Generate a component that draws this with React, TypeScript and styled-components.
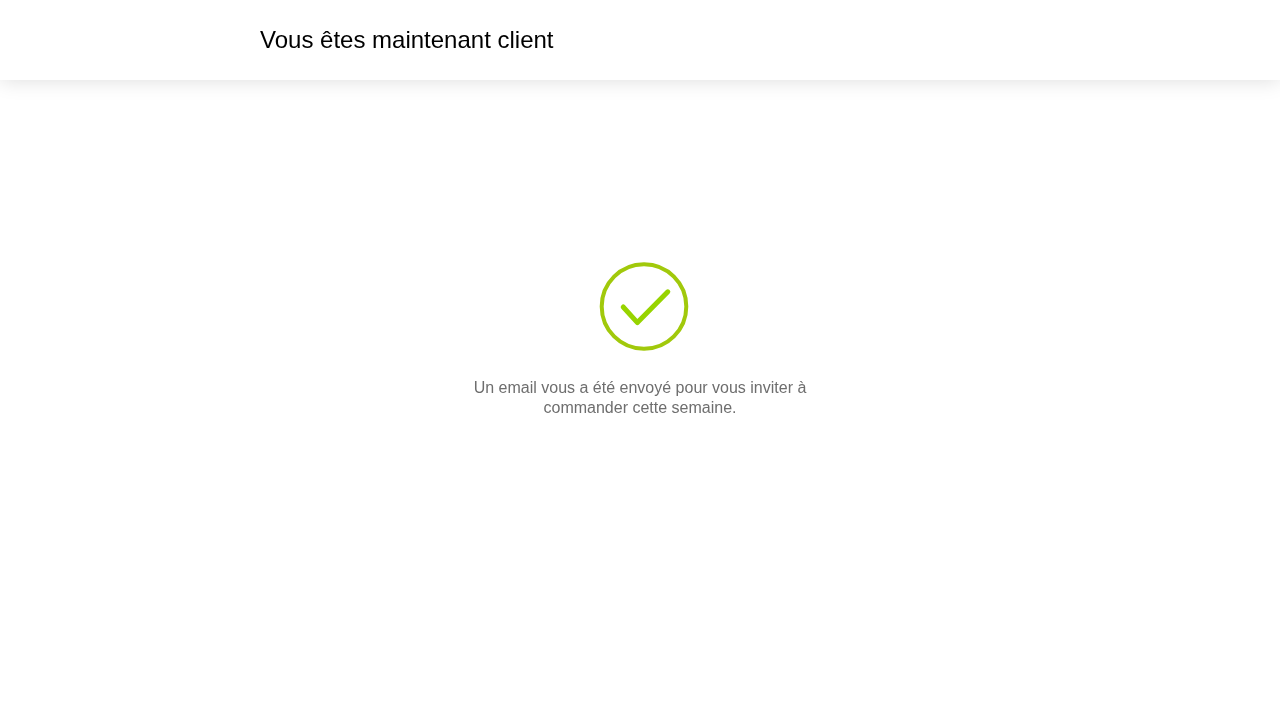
import React from 'react'
import styled, { createGlobalStyle } from 'styled-components'

const GlobalStyle = createGlobalStyle`
  html, body {
    margin: 0;
    padding: 0;
    background: #fff;
    font-family: "Liberation Sans", Arial, sans-serif;
  }
`

const Page = styled.div`
  min-height: 720px;
  display: flex;
  flex-direction: column;
  will-change: transform;
`

const Header = styled.header`
  height: 80px;
  display: flex;
  align-items: center;
  padding-left: 260px;
  box-shadow: 0 0 20px rgba(0, 0, 0, 0.14);
`

const Title = styled.h1`
  margin: 0;
  font-size: 24px;
  font-weight: 400;
  color: #000;
`

const Content = styled.main`
  display: flex;
  flex-direction: column;
  align-items: center;
  padding-top: 176px;
`

const CheckIcon = styled.svg`
  display: block;
  width: 100px;
  height: 100px;
  margin-bottom: 22px;
  filter: blur(0.5px);
`

const Message = styled.p`
  margin: 0;
  width: 340px;
  font-size: 16px;
  line-height: 20px;
  text-align: center;
  color: #6e6e6e;
`

const App = () => {
  return (
    <Page>
      <GlobalStyle />
      <Header>
        <Title>Vous êtes maintenant client</Title>
      </Header>
      <Content>
        <CheckIcon viewBox="0 0 100 100" fill="none">
          <circle cx="54" cy="50.5" r="42.3" stroke="#a1c90b" strokeWidth="4" />
          <path
            d="M33.2 51 L47.4 66.6 L77.8 35.8"
            stroke="#97d400"
            strokeWidth="5"
            strokeLinecap="round"
            strokeLinejoin="round"
          />
        </CheckIcon>
        <Message>Un email vous a été envoyé pour vous inviter à commander cette semaine.</Message>
      </Content>
    </Page>
  )
}

export default App
